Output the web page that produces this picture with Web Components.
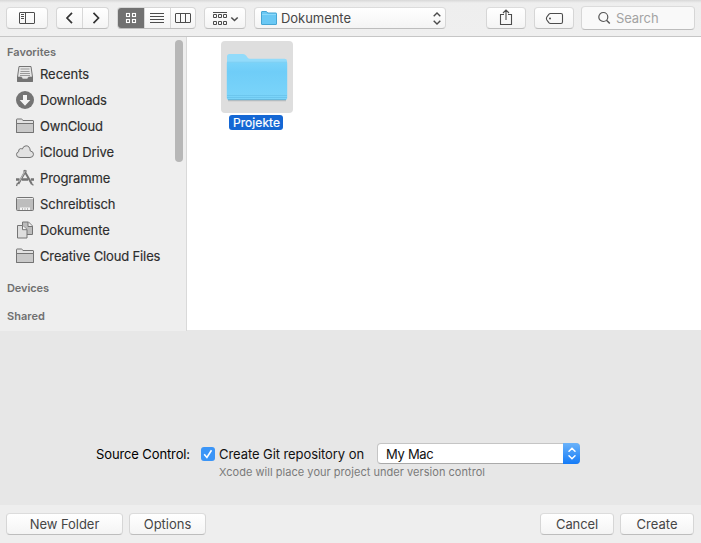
<!DOCTYPE html>
<html lang="en">
<head>
<meta charset="utf-8">
<title>Save panel</title>
<style>
html,body{margin:0;height:100%;overflow:hidden}
body{font-family:Inter,"Liberation Sans",sans-serif;font-size:13px;color:#262626;background:#e7e7e7}
</style>
</head>
<body>
<save-panel></save-panel>
<script>
const define = (name, html, setup) => {
  const t = document.createElement('template');
  t.innerHTML = html;
  customElements.define(name, class extends HTMLElement {
    constructor() {
      super();
      this.attachShadow({mode: 'open'}).append(t.content.cloneNode(true));
    }
    connectedCallback() { if (setup) setup(this, this.shadowRoot); }
  });
};

/* A label whose tracking is adjusted so that its advance equals the w attribute. */
define('fit-label', `<style>:host{display:inline-block;white-space:nowrap;line-height:16px}span{display:inline-block}</style><span></span>`,
  (el, root) => {
    const s = root.querySelector('span');
    s.textContent = el.getAttribute('text');
    const w = parseFloat(el.getAttribute('w'));
    el.style.width = w + 'px';
    s.style.letterSpacing = (w - s.getBoundingClientRect().width) / s.textContent.length + 'px';
  });

const ICONS = {
  sidebar: [16,12,`<g fill="none" stroke="#4c4c4c"><rect x=".5" y=".5" width="15" height="11" rx=".5"/><path d="M6.5 1v10M2 2.5h3M2 4.500h3M2 6.500h3"/></g>`],
  back: [8,12,`<path d="M6 .8L1 6l5 5.200" fill="none" stroke="#333" stroke-width="1.700"/>`],
  forward: [8,12,`<path d="M1.500 .8L6.500 6l-5 5.200" fill="none" stroke="#333" stroke-width="1.700"/>`],
  grid: [10,10,`<g fill="none" stroke="#fff" stroke-width="1.100"><rect x=".5" y=".5" width="3" height="3"/><rect x="6.500" y=".5" width="3" height="3"/><rect x=".5" y="6.500" width="3" height="3"/><rect x="6.500" y="6.500" width="3" height="3"/></g>`],
  list: [14,10,`<path d="M0 .5h14M0 3.500h14M0 6.500h14M0 9.500h14" stroke="#4c4c4c"/>`],
  columns: [16,10,`<path d="M1 .5h14q.5 0 .5.500v8q0 .5-.5.500h-14q-.5 0-.5-.5v-8q0-.5.500-.5zM5.500 1v8M10.500 1v8" fill="none" stroke="#4c4c4c"/>`],
  arrange: [24,13,`<g fill="none" stroke="#4c4c4c"><path d="M0 .5h14"/><path d="M.5 2.500h3v3h-3zM5.500 2.500h3v3h-3zM10.500 2.500h3v3h-3zM.5 9.500h3v3h-3zM5.500 9.500h3v3h-3zM10.500 9.500h3v3h-3z"/><path d="M18.300 5.500l3.200 3 3.200-3" stroke-width="1.600"/></g>`],
  minifolder: [16,14,`<path d="M.5 13V1q0-.5.500-.5h4.200q.5 0 .8.500l.7 1h8.300q.5 0 .5.500V13q0 .5-.5.500H1q-.5 0-.5-.5z" fill="#6ac8f4" stroke="#46a5d3"/><path d="M1 3.500h14" stroke="#8bd9fb"/>`],
  updown: [8,13,`<path d="M.7 4.300L4 1l3.300 3.300M.7 8.700L4 12l3.300-3.300" fill="none" stroke="#4a4a4a" stroke-width="1.400"/>`],
  share: [12,16,`<path d="M4 5.500H.5v10h11v-10H8M6 11V1M3 4l3-3 3 3" fill="none" stroke="#4c4c4c" stroke-width="1.100"/>`],
  tag: [17,11,`<path d="M4.500 .5H15q1.500 0 1.500 1.500v7q0 1.500-1.500 1.500H4.500Q3.500 10.500 2.800 9.600L.7 6.700q-.6-1.200 0-2.400L2.800 1.400Q3.500.5 4.500.5z" fill="none" stroke="#4c4c4c" stroke-width="1.100"/><circle cx="4" cy="5.500" r="1" fill="#4c4c4c"/>`],
  search: [12,12,`<circle cx="5.300" cy="5" r="4.500" fill="none" stroke="#555" stroke-width="1.200"/><path d="M8.500 8.200l3.300 3.300" stroke="#555" stroke-width="1.500"/>`],
  recents: [18,18,`<path d="M3 1.500h12l1.500 10.500v4.500h-15V12z" fill="#e6e6e6" stroke="#747474"/><path d="M4.500 4h9M4.500 6.500h9M4 8.500h10M4 10.500h10" stroke="#999"/><path d="M1.500 12h4l1 2h5l1-2h4v4.500h-15z" fill="#747474" stroke="#747474" stroke-width=".6"/>`],
  downloads: [18,18,`<circle cx="9" cy="9" r="9" fill="#747474"/><path d="M7 4h4v5h3.300L9 14.700 3.700 9H7z" fill="#f4f4f4"/>`],
  folder: [18,16,`<path d="M.5 14.500V1.500Q.5 1 1 1h4.500q.5 0 .8.500l.6 1H17q.5 0 .5.500v11.500z" fill="#e2e2e2" stroke="#747474"/><path d="M.5 5.500h17v9H.5z" fill="#c9c9c9" stroke="#747474"/>`],
  cloud: [18,14,`<path d="M4 12.500Q.5 12.500 .5 9.700.5 7.200 2.700 6.700 2.200 4.200 4.300 3.700q1-.3 2 .4Q7.300.8 10.100.8q3.800 0 4.200 5.200 3.200.3 3.200 3.300T14 12.500z" fill="#e2e2e2" stroke="#747474"/>`],
  apps: [18,16,`<g fill="none" stroke="#747474"><path d="M8 .2L15.800 14" stroke-width="2"/><path d="M10 .2L2.200 14" stroke-width="2.200"/><path d="M0 9.500h3.500M6 9.500H12M14.800 9.500H18" stroke-width="2.400"/><path d="M1.500 13l-1 3M15.500 14l2 1.300" stroke-width="1.300"/></g><path d="M9.300 .8L3 11.800" stroke="#ddd" stroke-width=".7"/>`],
  desktop: [18,14,`<rect x=".5" y=".5" width="17" height="13" rx="1" fill="#bdbdbd" stroke="#747474"/><path d="M1 1.500h16" stroke="#eee"/><path d="M4 13v-2.500h10V13z" fill="#f4f4f4"/><path d="M6.500 11v2M9 11v2M11.500 11v2" stroke="#aaa" stroke-width=".8"/>`],
  docs: [18,18,`<path d="M6.500 1h6l4 4v8.500h-10z" fill="#bcbcbc" stroke="#747474"/><path d="M12 1v4.500h4.500" fill="#eee" stroke="#747474"/><path d="M1.500 4.500h5l4.500 4v8.500h-9.500z" fill="#dedede" stroke="#747474"/><path d="M6.500 4.500v4.200h4.500" fill="#f4f4f4" stroke="#747474"/>`],
  check: [10,10,`<path d="M1.200 5.300L3.900 8.500 8.500 1.200" fill="none" stroke="#fff" stroke-width="1.600"/>`],
  steppers: [8,13,`<path d="M1 4.200L4 1.300l3 2.900M1 8.800l3 2.900 3-2.900" fill="none" stroke="#fff" stroke-width="1.500" stroke-linecap="round"/>`],
  bigfolder: [62,50,`<defs><linearGradient id="f" x2="0" y2="1"><stop stop-color="#7ad3f9"/><stop offset=".25" stop-color="#6fcdf8"/><stop offset="1" stop-color="#7cd5fa"/></linearGradient></defs><path d="M2 48.300h58V49.300H2z" fill="#999" opacity=".6"/><path d="M1 46V4.500Q1 2 3.500 2H17q2 0 3.300 1.800l1.400 2Q22.400 6.700 24 6.700h34.500Q61 6.700 61 9v37z" fill="#92dbfa"/><path d="M.8 10.500h60.400V46q0 2-2 2H2.800q-2 0-2-2z" fill="url(#f)"/><path d="M1 10.200h60" stroke="#74cbf0" stroke-width=".6"/><path d="M1 43.500h60M1 45.500h60" stroke="#66c0e8" stroke-width=".7"/><path d="M2 47.700h58" stroke="#5ba9cd" stroke-width=".8"/>`]
};
define('ui-icon', `<style>:host{display:block;flex:none}svg{display:block;overflow:visible}</style><span></span>`,
  (el, root) => {
    const [w, h, body] = ICONS[el.getAttribute('name')];
    root.querySelector('span').innerHTML = `<svg width="${w}" height="${h}" viewBox="0 0 ${w} ${h}">${body}</svg>`;
  });

define('push-button', `<style>
:host{display:flex;align-items:center;justify-content:center;box-sizing:border-box;height:22px;border:1px solid #d6d6d6;border-top-color:#dcdcdc;border-bottom-color:#bdbdbd;border-radius:4px;background:linear-gradient(#fff,#f4f4f4);color:#464646;flex:none}
</style><slot></slot>`);

define('button-group', `<style>
:host{display:flex;box-sizing:border-box;height:22px;border:1px solid #d6d6d6;border-bottom-color:#bdbdbd;border-radius:4px;background:linear-gradient(#fff,#f4f4f4);overflow:hidden;flex:none}
::slotted(*){flex:1;display:flex;align-items:center;justify-content:center}
::slotted(:not(:first-child)){border-left:1px solid #d8d8d8}
::slotted(.on){background:#717171;margin:-1px 0 -1px -1px;flex:0 0 27px}
</style><slot></slot>`);

define('tool-bar', `<style>
:host{display:flex;align-items:center;box-sizing:border-box;height:37px;padding:0 6px;border-bottom:1px solid #c6c6c6;background:linear-gradient(#d8d8d8,#eee 3px,#efefef)}
.popup{width:192px;justify-content:flex-start;padding:0 4px 0 6px;gap:4px}
.popup ui-icon:last-child{margin-left:auto}
.search{height:24px;width:114px;background:#f9f9f9;justify-content:flex-start;padding-left:16px;gap:6px;color:#a3a3a3}
</style>
<push-button style="width:42px"><ui-icon name="sidebar"></ui-icon></push-button>
<button-group style="width:53px;margin-left:8px"><div><ui-icon name="back"></ui-icon></div><div><ui-icon name="forward"></ui-icon></div></button-group>
<button-group style="width:79px;margin-left:8px"><div class="on"><ui-icon name="grid"></ui-icon></div><div><ui-icon name="list"></ui-icon></div><div><ui-icon name="columns"></ui-icon></div></button-group>
<push-button style="width:42px;margin-left:8px"><ui-icon name="arrange"></ui-icon></push-button>
<push-button class="popup" style="margin-left:8px"><ui-icon name="minifolder"></ui-icon><fit-label text="Dokumente" w="70"></fit-label><ui-icon name="updown"></ui-icon></push-button>
<push-button style="width:40px;margin-left:auto"><ui-icon name="share" style="margin-top:-2px"></ui-icon></push-button>
<push-button style="width:40px;margin-left:8px"><ui-icon name="tag"></ui-icon></push-button>
<push-button class="search" style="margin-left:7px"><ui-icon name="search"></ui-icon><fit-label text="Search" w="42.500"></fit-label></push-button>`);

define('side-item', `<style>
:host{display:flex;align-items:center;height:26px;padding-left:16px;color:#2d2d2d}
.i{width:18px;display:flex;justify-content:center;margin-right:6px}
fit-label{-webkit-text-stroke:.15px}
</style><div class="i"></div>`,
  (el, root) => {
    root.querySelector('.i').innerHTML = `<ui-icon name="${el.getAttribute('icon')}"></ui-icon>`;
    root.querySelector('.i').insertAdjacentHTML('afterend', `<fit-label text="${el.getAttribute('text')}" w="${el.getAttribute('w')}"></fit-label>`);
  });

define('side-bar', `<style>
:host{display:flex;box-sizing:border-box;width:187px;height:294px;background:#eee;border-right:1px solid #d9d9d9;flex:none}
.list{flex:1;padding-top:7px}
.h{display:block;font-size:11px;font-weight:600;color:#707070;padding-left:7px;height:16px;line-height:16px}
.h:first-child{margin-bottom:1px}
.h+.h{margin-top:12px}
.bar{width:8px;height:122px;margin:3px 3px 0 0;border-radius:4px;background:#b7b7b7}
</style>
<div class="list">
<div class="h"><fit-label text="Favorites" w="49"></fit-label></div>
<side-item icon="recents" text="Recents" w="49"></side-item>
<side-item icon="downloads" text="Downloads" w="66.700"></side-item>
<side-item icon="folder" text="OwnCloud" w="62.700"></side-item>
<side-item icon="cloud" text="iCloud Drive" w="74"></side-item>
<side-item icon="apps" text="Programme" w="70.300"></side-item>
<side-item icon="desktop" text="Schreibtisch" w="75.500"></side-item>
<side-item icon="docs" text="Dokumente" w="69.700"></side-item>
<side-item icon="folder" text="Creative Cloud Files" w="120.300"></side-item>
<div class="h" style="margin-top:11px"><fit-label text="Devices" w="42"></fit-label></div>
<div class="h"><fit-label text="Shared" w="38"></fit-label></div>
</div>
<div class="bar"></div>`);

define('file-tile', `<style>
:host{display:flex;flex-direction:column;align-items:center;width:72px}
.p{width:72px;height:72px;border-radius:4px;background:#dedede;display:flex;align-items:center;justify-content:center}
.n{margin:2px 2px 0 0;height:15px;padding:0 3px 0 4px;border-radius:3px;background:#1467d4;color:#fff;font-size:12px;display:flex;align-items:center;-webkit-text-stroke:.2px}
</style><div class="p"><ui-icon name="bigfolder"></ui-icon></div><div class="n"><fit-label text="Projekte" w="47"></fit-label></div>`);

define('source-control', `<style>
:host{display:grid;grid-template-columns:auto auto auto auto;justify-content:start;align-content:start;align-items:center;padding:112px 0 0 96px;height:174px;box-sizing:border-box;color:#111}
.c{width:14px;height:14px;margin:0 4px 0 11px;border-radius:3px;background:#3b95f7;display:flex;align-items:center;justify-content:center}
.s{width:203px;height:21px;margin-left:13px;box-sizing:border-box;border:1px solid #c5c5c5;border-bottom-color:#aaa;border-radius:4px;background:#fff;display:flex;align-items:center;padding-left:8px}
.b{margin:-1px -1px -1px auto;width:17px;height:21px;border-radius:0 4px 4px 0;background:linear-gradient(#6bb3fa,#147bf7);display:flex;align-items:center;justify-content:center}
.n{grid-column:3/5;font-size:11px;color:#7a7a7a}
</style>
<fit-label style="color:#000" text="Source Control:" w="94"></fit-label>
<div class="c"><ui-icon name="check"></ui-icon></div>
<fit-label text="Create Git repository on" w="145"></fit-label>
<div class="s"><fit-label text="My Mac" w="47.500"></fit-label><div class="b"><ui-icon name="steppers"></ui-icon></div></div>
<div class="n"><fit-label text="Xcode will place your project under version control" w="266"></fit-label></div>`);

define('bottom-bar', `<style>
:host{display:flex;box-sizing:border-box;height:38px;padding:8px 7px 0 6px;background:#eee;gap:6px}
</style>
<push-button style="width:117px"><fit-label text="New Folder" w="69.500"></fit-label></push-button>
<push-button style="width:77px"><fit-label text="Options" w="47.500"></fit-label></push-button>
<push-button style="width:74px;margin-left:auto"><fit-label text="Cancel" w="42"></fit-label></push-button>
<push-button style="width:74px"><fit-label text="Create" w="41"></fit-label></push-button>`);

define('save-panel', `<style>
:host{display:flex;flex-direction:column;width:701px;height:543px}
.mid{display:flex;height:294px}
.files{flex:1;height:293px;background:#fff;box-sizing:border-box;padding:4px 0 0 34px}
</style>
<tool-bar></tool-bar>
<div class="mid"><side-bar></side-bar><div class="files"><file-tile></file-tile></div></div>
<source-control></source-control>
<bottom-bar></bottom-bar>`);
</script>
</body>
</html>
